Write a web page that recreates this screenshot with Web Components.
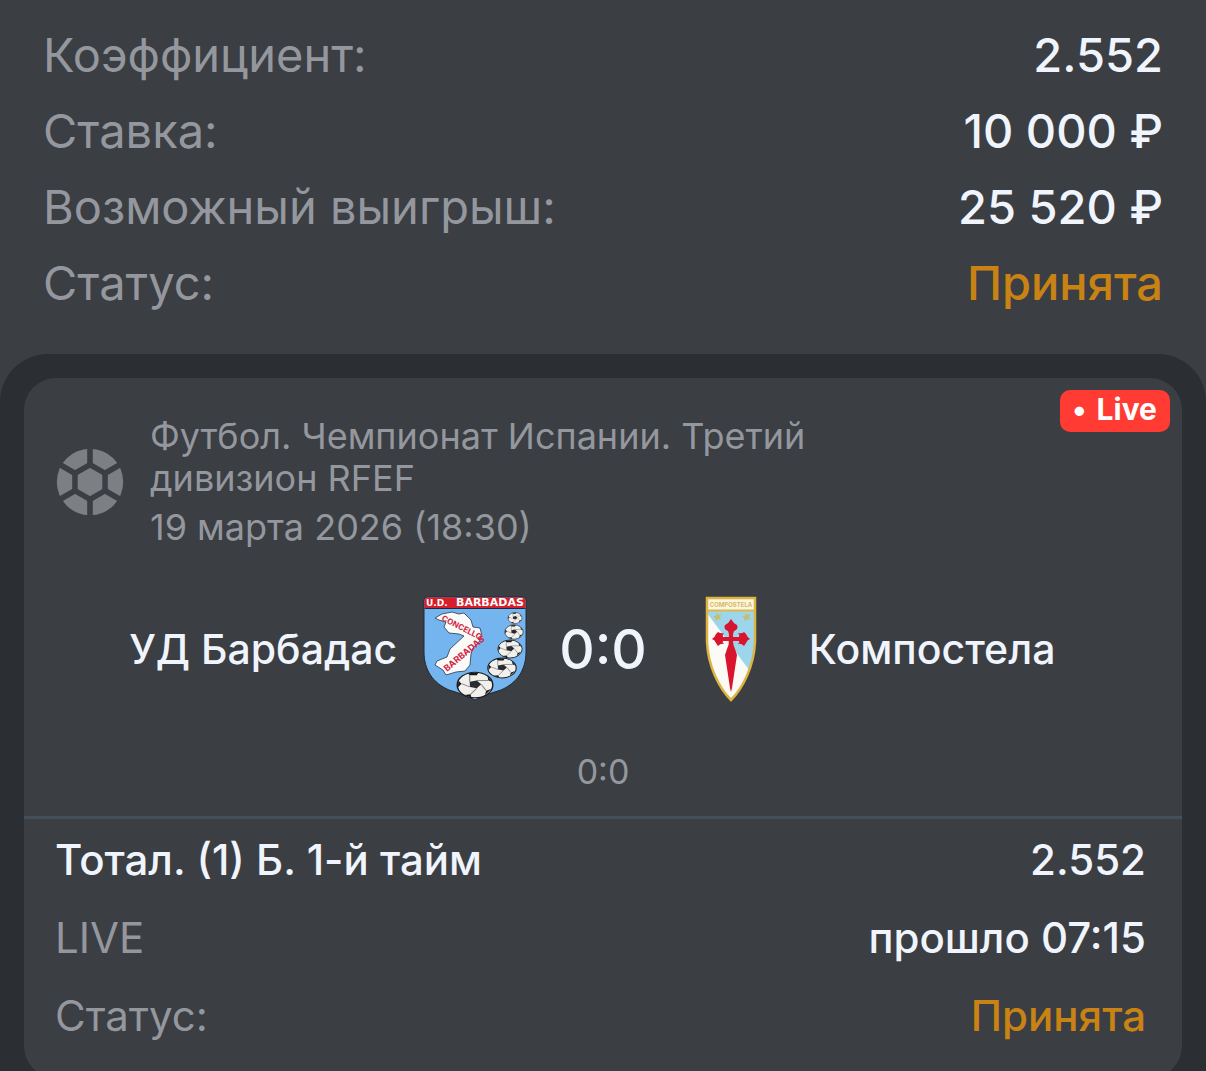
<!DOCTYPE html>
<html lang="ru">
<head>
<meta charset="UTF-8">
<meta name="viewport" content="width=device-width, initial-scale=1">
<title>Купон</title>
<style>
    html, body {
        height: 100%;
    }
    body {
        --surface: #3b3e43;
        --backdrop: #2b2e33;
        --muted: #94979e;
        --text: #f0f4fc;
        --accent: #c98314;
        --line: #434f59;
        margin: 0;
        overflow: hidden;
        background: var(--surface);
        color: var(--text);
        font-family: Inter, "Noto Sans", sans-serif;
    }
</style>
</head>
<body>
<bet-coupon>
    <info-row slot="summary" label="Коэффициент:">2.552</info-row>
    <info-row slot="summary" label="Ставка:">10 000 ₽</info-row>
    <info-row slot="summary" label="Возможный выигрыш:">25 520 ₽</info-row>
    <info-row slot="summary" label="Статус:" accent>Принята</info-row>

    <event-card>
        <live-badge slot="badge">Live</live-badge>
        <event-head slot="head">
            <ball-icon slot="icon"></ball-icon>
            <span slot="league">Футбол. Чемпионат Испании. Третий дивизион RFEF</span>
            <time slot="date" datetime="2026-03-19T18:30">19 марта 2026 (18:30)</time>
        </event-head>
        <match-score slot="match" period="0:0">
            <span slot="home">УД Барбадас</span>
            <barbadas-crest slot="home-crest"></barbadas-crest>
            <span slot="score">0:0</span>
            <compostela-crest slot="away-crest"></compostela-crest>
            <span slot="away">Компостела</span>
        </match-score>
        <info-row label="Тотал. (1) Б. 1-й тайм" strong>2.552</info-row>
        <info-row label="LIVE">прошло 07:15</info-row>
        <info-row label="Статус:" accent>Принята</info-row>
    </event-card>
</bet-coupon>

<script>
class BetCoupon extends HTMLElement {
    constructor() {
        super();
        this.attachShadow({ mode: 'open' });
    }

    connectedCallback() {
        this.shadowRoot.innerHTML = `
        <style>
            :host {
                display: flex;
                flex-direction: column;
                min-height: 100%;
            }
            .summary {
                padding: 16px 43px 34px 43px;
                --row-height: 76px;
                --row-size: 47px;
            }
            .events {
                flex: 1;
                padding: 24px;
                border-radius: 48px 48px 0 0;
                background: var(--backdrop);
            }
        </style>

        <section class="summary"><slot name="summary"></slot></section>
        <section class="events"><slot></slot></section>
        `;
    }
}
customElements.define('bet-coupon', BetCoupon);

class InfoRow extends HTMLElement {
    constructor() {
        super();
        this.attachShadow({ mode: 'open' });
    }

    connectedCallback() {
        this.shadowRoot.innerHTML = `
        <style>
            :host {
                display: flex;
                justify-content: space-between;
                align-items: center;
                height: var(--row-height);
                font-size: var(--row-size);
                white-space: nowrap;
            }
            .label {
                color: var(--muted);
            }
            .value {
                font-weight: 500;
            }
            :host([strong]) .label {
                color: var(--text);
                font-weight: 500;
            }
            :host([accent]) .value {
                color: var(--accent);
            }
        </style>

        <span class="label">${this.getAttribute('label')}</span>
        <span class="value"><slot></slot></span>
        `;
    }
}
customElements.define('info-row', InfoRow);

class EventCard extends HTMLElement {
    constructor() {
        super();
        this.attachShadow({ mode: 'open' });
    }

    connectedCallback() {
        this.shadowRoot.innerHTML = `
        <style>
            :host {
                display: block;
                position: relative;
                border-radius: 32px;
                background: var(--surface);
            }
            .badge {
                position: absolute;
                top: 12px;
                right: 12px;
            }
            .top {
                padding: 37px 32px 23px 32px;
                border-bottom: 3px solid var(--line);
            }
            .rows {
                padding: 1px 36px 24px 31px;
                --row-height: 78px;
                --row-size: 42px;
            }
        </style>

        <div class="badge"><slot name="badge"></slot></div>
        <div class="top">
            <slot name="head"></slot>
            <slot name="match"></slot>
        </div>
        <div class="rows"><slot></slot></div>
        `;
    }
}
customElements.define('event-card', EventCard);

class LiveBadge extends HTMLElement {
    constructor() {
        super();
        this.attachShadow({ mode: 'open' });
    }

    connectedCallback() {
        this.shadowRoot.innerHTML = `
        <style>
            :host {
                display: flex;
                align-items: center;
                gap: 10px;
                height: 42px;
                padding: 0 13px 0 12px;
                box-sizing: border-box;
                border-radius: 10px;
                background: #ff3b33;
                color: #fff;
                font-size: 30px;
                line-height: 36px;
                font-weight: 700;
            }
            span {
                padding-bottom: 4px;
            }
        </style>

        <span>•</span>
        <span><slot></slot></span>
        `;
    }
}
customElements.define('live-badge', LiveBadge);

class EventHead extends HTMLElement {
    constructor() {
        super();
        this.attachShadow({ mode: 'open' });
    }

    connectedCallback() {
        this.shadowRoot.innerHTML = `
        <style>
            :host {
                display: flex;
                align-items: center;
                gap: 26px;
                color: var(--muted);
                font-size: 36px;
                line-height: 42px;
            }
            .text {
                display: grid;
                gap: 7px;
                max-width: 700px;
            }
        </style>

        <slot name="icon"></slot>
        <div class="text">
            <slot name="league"></slot>
            <slot name="date"></slot>
        </div>
        `;
    }
}
customElements.define('event-head', EventHead);

class BallIcon extends HTMLElement {
    constructor() {
        super();
        this.attachShadow({ mode: 'open' });
    }

    connectedCallback() {
        this.shadowRoot.innerHTML = `
        <style>
            :host {
                display: block;
                flex: none;
                width: 68px;
                height: 68px;
            }
            svg {
                display: block;
            }
        </style>

        <svg width="68" height="68" viewBox="-34 -34 68 68" aria-hidden="true">
            <circle r="33.2" fill="#7c8085"/>
            <path d="M0-34V34M-29.4-17L29.4 17M-29.4 17L29.4-17" stroke="#3b3e43" stroke-width="5.6"/>
            <path d="M0-20.6L17.8-10.3V10.3L0 20.6L-17.8 10.3V-10.3Z" fill="#3b3e43"/>
            <path d="M0-12.6L11-6.3V6.3L0 12.6L-11 6.3V-6.3Z" fill="#7c8085" stroke="#7c8085" stroke-width="2.6" stroke-linejoin="round"/>
        </svg>
        `;
    }
}
customElements.define('ball-icon', BallIcon);

class MatchScore extends HTMLElement {
    constructor() {
        super();
        this.attachShadow({ mode: 'open' });
    }

    connectedCallback() {
        this.shadowRoot.innerHTML = `
        <style>
            :host {
                display: block;
                padding-top: 48px;
            }
            .teams {
                display: grid;
                grid-template-columns: 1fr auto 1fr;
                align-items: center;
                gap: 32px;
                font-weight: 500;
                font-size: 41px;
                white-space: nowrap;
            }
            .team {
                display: flex;
                align-items: center;
                gap: 26px;
            }
            .home {
                justify-content: flex-end;
            }
            .score {
                font-size: 55px;
            }
            .period {
                margin-top: 49px;
                color: var(--muted);
                font-size: 34px;
                line-height: 42px;
                text-align: center;
            }
        </style>

        <div class="teams">
            <div class="team home"><slot name="home"></slot><slot name="home-crest"></slot></div>
            <div class="score"><slot name="score"></slot></div>
            <div class="team"><slot name="away-crest"></slot><slot name="away"></slot></div>
        </div>
        <div class="period">${this.getAttribute('period')}</div>
        `;
    }
}
customElements.define('match-score', MatchScore);

class BarbadasCrest extends HTMLElement {
    constructor() {
        super();
        this.attachShadow({ mode: 'open' });
    }

    connectedCallback() {
        this.shadowRoot.innerHTML = `
        <style>
            :host {
                display: block;
                flex: none;
                width: 104px;
                height: 106px;
            }
            svg {
                display: block;
            }
            text {
                font-family: Inter, sans-serif;
                font-weight: 700;
            }
            .title {
                font-family: "DejaVu Sans", sans-serif;
            }
        </style>

        <svg width="104" height="106" viewBox="0 0 104 106">
            <defs>
                <g id="ball">
                    <circle r="10" fill="#f1f0ec" stroke="#1c1c20" stroke-width=".8"/>
                    <path d="M-3-2.500L1-3.500L3.500-.5L1 2.500L-2.800 1.500Z" fill="#2a2a2f"/>
                    <path d="M-4-9.200L2-9.800L1-7.600L-3-7.600ZM7-7L9.500-2.500L7.500-3.500ZM9.300 3L5.500 8L6.300 4.500ZM-2 9.800L-6 7.800L-2.500 7.300ZM-9.600 2L-9.300-3.500L-7.600-1Z" fill="#17171b"/>
                    <path d="M-3-2.500L-3-7.600M1-3.500L7.500-3.500M3.500-.5L6.300 4.500M1 2.500L-2.500 7.300M-2.800 1.500L-7.600-1" stroke="#8b8a8c" stroke-width=".7"/>
                </g>
            </defs>
            <path d="M4 1H100Q103 1 103 4V56C103 74 94 87 78 94Q63 98 52 104Q41 98 26 94C10 87 1 74 1 56V4Q1 1 4 1Z" fill="#74b5ef" stroke="#202a38" stroke-width="1"/>
            <path d="M1.500 12V5Q1.500 1.500 5 1.500H99Q102.500 1.500 102.500 5V12Z" fill="#d71f2b"/>
            <path d="M1.500 12.500H102.500" stroke="#1d2a45" stroke-width="1"/>
            <text class="title" x="3" y="10" font-size="9" fill="#fff">U.D.</text>
            <text class="title" x="33" y="10" font-size="11" fill="#fff">BARBADAS</text>
            <path d="M12 22L19 18L29 16L36 18L41 17L48 24L50 31L57 32L59 40L56 46L50 52L48 58L47 69L42 75L33 76L23 79L20 74L12 69L14 65L24 61L27 53L41 40L36 38L26 37L21 31L23 26L16 24Z" fill="#fafaf8" stroke="#26374d" stroke-width=".8"/>
            <text transform="translate(18 24) rotate(27)" font-size="8" fill="#d2233f">CONCELLO</text>
            <text transform="translate(24 76) rotate(-40)" font-size="9" fill="#d2233f">BARBADAS</text>
            <use href="#ball" transform="translate(92 22) scale(.7 .55)"/>
            <use href="#ball" transform="translate(91 36) scale(.92 .72)"/>
            <use href="#ball" transform="translate(87 53) scale(1.220 .9)"/>
            <use href="#ball" transform="translate(79 72) scale(1.420 1)"/>
            <use href="#ball" transform="translate(52 89) scale(1.780 1.280)"/>
        </svg>
        `;
    }
}
customElements.define('barbadas-crest', BarbadasCrest);

class CompostelaCrest extends HTMLElement {
    constructor() {
        super();
        this.attachShadow({ mode: 'open' });
    }

    connectedCallback() {
        this.shadowRoot.innerHTML = `
        <style>
            :host {
                display: block;
                flex: none;
                width: 104px;
                height: 106px;
            }
            svg {
                display: block;
            }
            text {
                font-family: Inter, sans-serif;
                font-weight: 700;
            }
        </style>

        <svg width="104" height="106" viewBox="0 0 104 106">
            <defs>
                <clipPath id="shield"><path d="M28 2H76V46C75 70 64 92 52 104C40 92 29 70 28 46Z"/></clipPath>
            </defs>
            <g clip-path="url(#shield)">
                <rect x="27" width="50" height="106" fill="#fbfaf5"/>
                <path d="M28 15H76V82L28 17Z" fill="#9dd6ec"/>
                <rect x="27" width="50" height="14" fill="#fbf6df"/>
                <path d="M27 14.500H77" stroke="#dcb848" stroke-width="2"/>
            </g>
            <path d="M28 2H76V46C75 70 64 92 52 104C40 92 29 70 28 46Z" fill="none" stroke="#dcb441" stroke-width="2.500"/>
            <text x="52" y="11" font-size="6" text-anchor="middle" fill="#d9b95f">COMPOSTELA</text>
            <path d="M37 17L39 19L42 18L41 21L42 24L39 23L37 25L36 22L34 20L37 20ZM66 17L68 19L71 18L70 21L71 24L68 23L66 25L65 22L63 20L66 20Z" fill="#c8bd6a"/>
            <path d="M52 23Q54 27 58 29Q60 33 55 35Q54 37 54 41H60Q61 39 59 37Q63 38 65 36L67 38Q68 41 71 43Q68 44 67 47L65 50Q62 47 59 48Q61 46 60 45H54Q54 49 56 53L58 59L53 92L52 96L51 92L46 59L48 53Q50 49 50 45H44Q43 46 45 48Q42 47 39 50L37 47Q36 44 33 43Q36 41 37 38L39 36Q42 38 45 37Q43 39 44 41H50Q50 37 49 35Q44 33 46 29Q50 27 52 23Z" fill="#d8142e"/>
        </svg>
        `;
    }
}
customElements.define('compostela-crest', CompostelaCrest);
</script>
</body>
</html>
